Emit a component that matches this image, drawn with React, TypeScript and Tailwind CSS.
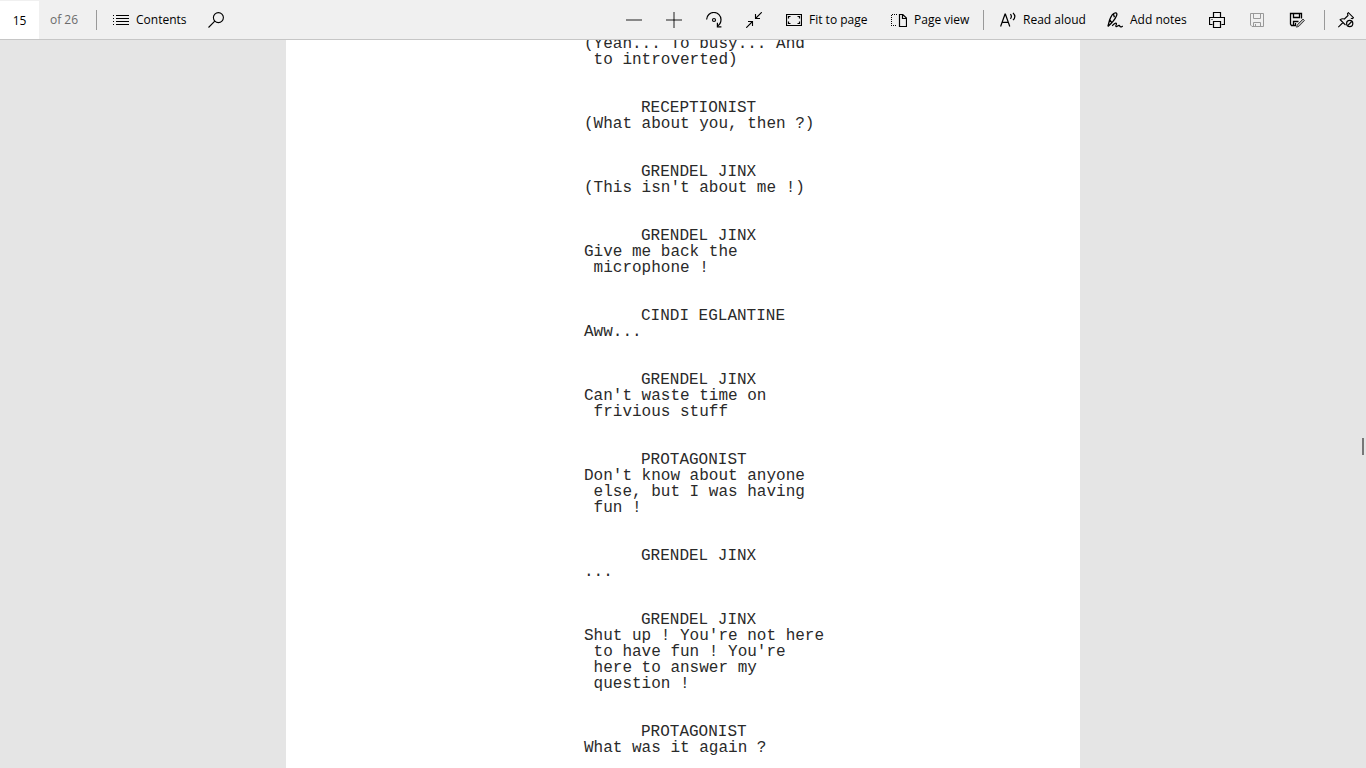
import type { ReactNode } from "react";

function Icon({ children }: { children: ReactNode }) {
  return (
    <svg
      viewBox="0 0 16 16"
      className="size-4 shrink-0"
      fill="none"
      stroke="currentColor"
      strokeWidth="1"
      aria-hidden="true"
    >
      {children}
    </svg>
  );
}

const icons = {
  contents: (
    <Icon>
      <path d="M3 3.5h13M3 6.5h13M3 9.5h13M3 12.5h13" strokeWidth="1.1" />
      <path d="M0 3.5h1M0 6.5h1M0 9.5h1M0 12.5h1" />
    </Icon>
  ),
  search: (
    <Icon>
      <circle cx="10.4" cy="5.6" r="5" strokeWidth="1.1" />
      <path d="M6.8 9.2L.5 15.5" strokeWidth="1.1" />
    </Icon>
  ),
  minus: (
    <Icon>
      <path d="M0 8h16" strokeWidth="2" />
    </Icon>
  ),
  plus: (
    <Icon>
      <path d="M0 8h16M8 0v16" strokeWidth="2" />
      <path d="M7 8h2" stroke="#444444" strokeWidth="2" />
    </Icon>
  ),
  rotate: (
    <Icon>
      <path d="M.6 7.5A7.2 7.2 0 0 1 15 7.8c0 2.7-1.4 5-3.6 6.4" strokeWidth="1.2" />
      <path d="M11.4 10.8v4h4" strokeWidth="1.2" />
      <circle cx="8" cy="8" r="1.5" strokeWidth="1.2" />
    </Icon>
  ),
  shrink: (
    <Icon>
      <path d="M15.8.2L9.5 6.5M9.5 2v4.5H14M.2 15.8l6.3-6.3M2 9.5h4.5V14" strokeWidth="1.1" />
    </Icon>
  ),
  fit: (
    <Icon>
      <path d="M.5 2.5h15v11H.5z" strokeWidth="1.2" />
      <path d="M2.5 6.5v-2h2M11.5 4.5h2v2M13.5 9.5v2h-2M4.5 11.5h-2v-2" strokeWidth="1.2" />
    </Icon>
  ),
  pageView: (
    <Icon>
      <path d="M6 2.5H0M.5 3v11M0 13.5h6" strokeDasharray="1 1" />
      <path d="M8.5 2.5h3.3l3.7 3.7v8.3h-7zM11.5 2.5v4h4" strokeWidth="1.2" />
    </Icon>
  ),
  readAloud: (
    <Icon>
      <path d="M.6 14.5L5 2.2h.4l4.4 12.3M2.2 10.3h6" strokeWidth="1.2" />
      <path d="M10.4 2.2c1.2 1.4 1.2 3.2 0 4.6M13 .8c2.4 2.4 2.4 5 0 7.4" strokeWidth="1.2" />
    </Icon>
  ),
  notes: (
    <Icon>
      <path
        d="M.9 14.5L2.6 8C4 4.200 6.500 1 8.300.8c1.700-.1 1.900 1.300 1.200 3C8.200 7 5.500 10.600.9 14.500M6.500 2.300l.9 3M2.800 7.800l1.900 2.900"
        strokeWidth="1.300"
      />
      <path
        d="M5.200 13.800c1.700-2 3.800-3.200 4.200-2.400.5 1-1.200 2.500-.4 3.100 1 .6 2.100-1.500 3.100-1.100.8.400.7 1.500 1.700 1.500.8 0 1.300-.5 2-.8"
        strokeWidth="1.200"
      />
    </Icon>
  ),
  print: (
    <Icon>
      <path d="M4.500 5.500v-5h7v5M3.500 12.500h-3v-7h15v7h-3M4.500 9.500h7v6h-7z" strokeWidth="1.200" />
      <path d="M2.500 7.500h1" />
    </Icon>
  ),
  save: (
    <Icon>
      <path d="M1.500 1.500h13v13H3l-1.500-1.500zM4.500 1.500v5h7v-5M4.500 14.500v-4h7v4M6.500 12v2.500" />
    </Icon>
  ),
  saveAs: (
    <Icon>
      <path d="M7 13.500H2.500L1.500 12V1.500h11v5M4.500 1.500v4h6v-4M4.500 13.500v-4h5M6.500 11v2.500" strokeWidth="1.300" />
      <path d="M14 7l1.500 1.500-5.500 5.700-2.500 1 .9-2.600z" fill="#b0b0b0" stroke="#444444" />
    </Icon>
  ),
  pin: (
    <Icon>
      <path
        d="M7.500 13L2.200 7.700c1.300-1 2.800-1.200 4.200-.7L10 3.500 9.500 1.700l.9-1L15.400 5.700l-1 1-1.600-.5M5 10.500L.3 15.200"
        strokeWidth="1.100"
      />
      <circle cx="11.700" cy="11.500" r="3.100" strokeWidth="1.200" />
      <path d="M9.700 13.600l4-4.100" strokeWidth="1.200" />
    </Icon>
  ),
};

function IconButton({ label, icon, tone = "text-black" }: { label: string; icon: ReactNode; tone?: string }) {
  return (
    <button type="button" aria-label={label} className={`flex h-full w-10 shrink-0 items-center justify-center ${tone}`}>
      {icon}
    </button>
  );
}

function TextButton({ label, icon, width }: { label: string; icon: ReactNode; width: string }) {
  return (
    <button type="button" className={`flex h-full shrink-0 items-center gap-[7px] whitespace-nowrap pl-3 ${width}`}>
      {icon}
      {label}
    </button>
  );
}

function Divider({ margin }: { margin: string }) {
  return <div className={`h-5 w-px shrink-0 bg-[#999999] ${margin}`} />;
}

function Toolbar() {
  return (
    <header className="flex h-10 shrink-0 items-center justify-between border-b border-[#c6c6c6] bg-[#f0f0f0] pt-px text-xs text-black">
      <div className="flex h-full items-center">
        <input
          aria-label="Page number"
          defaultValue="15"
          className="h-full w-[39px] bg-white text-center outline-none"
        />
        <span className="w-[57px] pl-[11px] text-[#6b6b6b]">of 26</span>
        <Divider margin="mr-1" />
        <TextButton label="Contents" icon={icons.contents} width="w-[95px]" />
        <IconButton label="Search" icon={icons.search} />
      </div>
      <div className="flex h-full items-center">
        <IconButton label="Zoom out" icon={icons.minus} tone="text-[#888888]" />
        <IconButton label="Zoom in" icon={icons.plus} tone="text-[#888888]" />
        <IconButton label="Rotate" icon={icons.rotate} />
        <IconButton label="Exit full width" icon={icons.shrink} />
        <TextButton label="Fit to page" icon={icons.fit} width="w-[105px]" />
        <TextButton label="Page view" icon={icons.pageView} width="w-[104px]" />
        <Divider margin="mr-1" />
        <TextButton label="Read aloud" icon={icons.readAloud} width="w-[107px]" />
        <TextButton label="Add notes" icon={icons.notes} width="w-[102px]" />
        <IconButton label="Print" icon={icons.print} />
        <IconButton label="Save" icon={icons.save} tone="text-[#999999]" />
        <IconButton label="Save as" icon={icons.saveAs} />
        <Divider margin="ml-[7px] mr-px" />
        <IconButton label="Unpin toolbar" icon={icons.pin} />
      </div>
    </header>
  );
}

type Speech = { speaker?: string; lines: string[] };

const script: Speech[] = [
  { lines: ["(Yeah... To busy... And", " to introverted)"] },
  { speaker: "RECEPTIONIST", lines: ["(What about you, then ?)"] },
  { speaker: "GRENDEL JINX", lines: ["(This isn't about me !)"] },
  { speaker: "GRENDEL JINX", lines: ["Give me back the", " microphone !"] },
  { speaker: "CINDI EGLANTINE", lines: ["Aww..."] },
  { speaker: "GRENDEL JINX", lines: ["Can't waste time on", " frivious stuff"] },
  { speaker: "PROTAGONIST", lines: ["Don't know about anyone", " else, but I was having", " fun !"] },
  { speaker: "GRENDEL JINX", lines: ["..."] },
  { speaker: "GRENDEL JINX", lines: ["Shut up ! You're not here", " to have fun ! You're", " here to answer my", " question !"] },
  { speaker: "PROTAGONIST", lines: ["What was it again ?"] },
];

export default function App() {
  return (
    <div className="relative flex h-screen flex-col overflow-hidden bg-[#e5e5e5] font-['Open_Sans',sans-serif]">
      <Toolbar />
      <div className="flex min-h-0 flex-1">
        <main className="mx-auto w-[794px] max-w-full overflow-hidden bg-white pl-[298px] font-['Liberation_Mono',monospace] text-base leading-4 text-[#2a2a2a]">
          <div className="-mt-1 flex flex-col gap-8">
            {script.map((speech, i) => (
              <section key={i}>
                {speech.speaker && <h2 className="pl-[57px]">{speech.speaker}</h2>}
                <p className="whitespace-pre">{speech.lines.join("\n")}</p>
              </section>
            ))}
          </div>
        </main>
      </div>
      <div className="absolute right-0.5 top-[438px] h-[17px] w-0.5 bg-[#777777]" />
    </div>
  );
}
